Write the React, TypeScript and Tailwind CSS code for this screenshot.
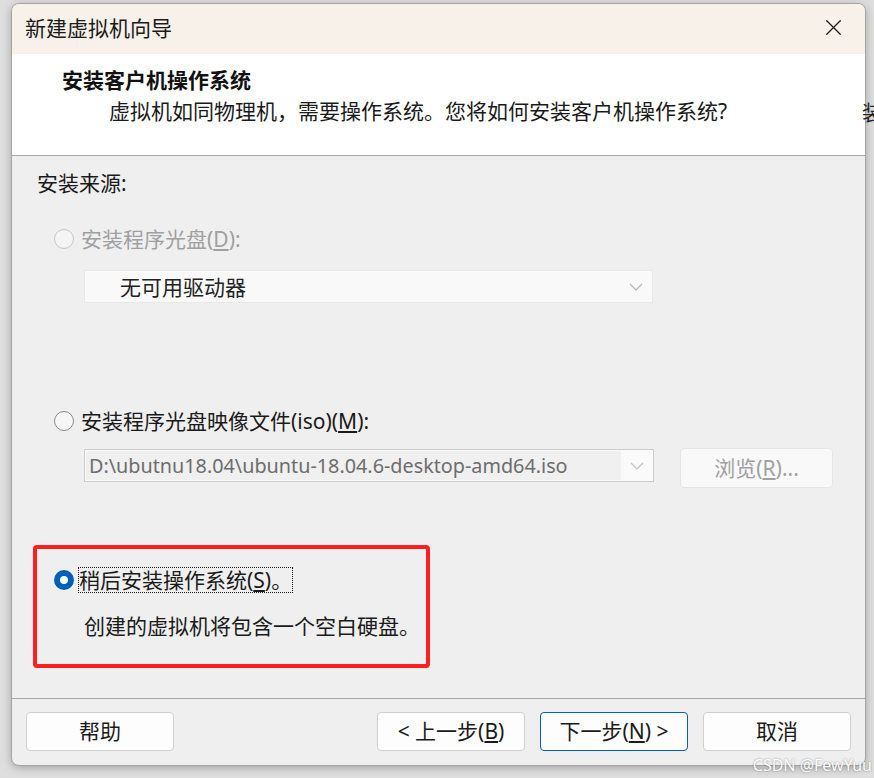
import { X } from "lucide-react";

const font = "font-['Noto_Sans','Noto_Sans_CJK_SC',sans-serif]";

function Chevron({ color = "#b4b4b4" }: { color?: string }) {
  return (
    <svg width="14" height="8" viewBox="0 0 14 8">
      <polyline points="1,1 7,7 13,1" fill="none" stroke={color} strokeWidth="1.2" />
    </svg>
  );
}

function Radio({ state }: { state: "disabled" | "off" | "on" }) {
  if (state === "on") {
    return (
      <span className="flex h-[20px] w-[20px] items-center justify-center rounded-full bg-[#005fb8]">
        <span className="h-[8px] w-[8px] rounded-full bg-white" />
      </span>
    );
  }
  return (
    <span
      className={
        state === "disabled"
          ? "h-[20px] w-[20px] rounded-full border border-[#c6c6c6] bg-[#f4f4f4]"
          : "h-[20px] w-[20px] rounded-full border border-[#8a8a8a] bg-[#f7f7f7]"
      }
    />
  );
}

function FooterButton({ children, primary }: { children: React.ReactNode; primary?: boolean }) {
  return (
    <button
      className={
        "flex h-[39px] w-[148px] items-center justify-center rounded-[4px] bg-[#fdfdfd] text-[21px] leading-[28px] text-[#1a1a1a] " +
        (primary ? "border border-[#005fb8]" : "border border-[#d0d0d0]")
      }
    >
      {children}
    </button>
  );
}

export default function App() {
  return (
    <div className={"relative h-[778px] w-[874px] overflow-hidden bg-[#dedede] pl-[11px] pt-[3px] " + font}>
      <span className="absolute right-[-9px] top-[98px] text-[21px] leading-[28px] text-[#222]">装</span>

      <div className="flex h-[763px] w-[855px] flex-col overflow-hidden rounded-[8px] border border-[#a4a4a4] bg-[#efefef] shadow-[0_2px_8px_rgba(0,0,0,0.25)]">
        {/* title bar */}
        <div className="flex h-[50px] shrink-0 items-center justify-between bg-[#f7f1ea] pb-[3px] pl-[13px] pr-[18px]">
          <span className="text-[21px] leading-[28px] text-[#1a1a1a]">新建虚拟机向导</span>
          <X size={27} strokeWidth={1.1} color="#1a1a1a" />
        </div>

        {/* header */}
        <div className="flex h-[102px] shrink-0 flex-col border-b border-[#a8a8a8] bg-white pt-[12px]">
          <span className="pl-[50px] text-[21px] font-bold leading-[28px] text-[#111]">安装客户机操作系统</span>
          <span className="mt-[3px] pl-[97px] text-[21px] leading-[28px] text-[#1a1a1a]">
            虚拟机如同物理机，需要操作系统。您将如何安装客户机操作系统?
          </span>
        </div>

        {/* body */}
        <div className="relative flex flex-1 flex-col pl-[25px] pt-[13px] text-[21px] leading-[28px] text-[#1a1a1a]">
          <span>安装来源:</span>

          <div className="mt-[28px] flex items-center gap-[7px] pl-[17px] text-[#a0a0a0]">
            <Radio state="disabled" />
            <span>
              安装程序光盘(<u>D</u>):
            </span>
          </div>

          <div className="ml-[47px] mt-[17px] flex h-[33px] w-[569px] items-center justify-between border border-[#e8e8e8] bg-[#f9f9f9] pl-[35px] pr-[9px]">
            <span className="text-[#222]">无可用驱动器</span>
            <Chevron />
          </div>

          <div className="mt-[104px] flex items-center gap-[7px] pl-[17px]">
            <Radio state="off" />
            <span>
              安装程序光盘映像文件(iso)(<u>M</u>):
            </span>
          </div>

          <div className="mt-[13px] flex items-start">
            <div className="ml-[47px] mt-[1px] flex h-[33px] w-[570px] items-center border border-[#cccccc] bg-[#fafafa] p-[1px]">
              <span className="flex h-full w-[535px] items-center bg-[#f0f0f0] pl-[3px] text-[19.8px] text-[#6d6d6d]">
                D:\ubutnu18.04\ubuntu-18.04.6-desktop-amd64.iso
              </span>
              <span className="flex flex-1 justify-center">
                <Chevron color="#c0c0c0" />
              </span>
            </div>
            <button className="ml-[26px] flex h-[40px] w-[153px] items-center justify-center rounded-[4px] border border-[#e6e6e6] bg-[#f9f9f9] text-[21px] text-[#a0a0a0]">
              浏览(<u>R</u>)...
            </button>
          </div>

          <div className="mt-[79px] flex items-center gap-[4px] pl-[17px]">
            <Radio state="on" />
            <span className="flex h-[26px] items-center border border-dotted border-[#1a1a1a]">
              稍后安装操作系统(<u>S</u>)。
            </span>
          </div>

          <span className="mt-[19px] pl-[47px]">创建的虚拟机将包含一个空白硬盘。</span>

          <div className="pointer-events-none absolute left-[21px] top-[389px] h-[123px] w-[397px] rounded-[4px] border-4 border-[#ff1f1f]" />
        </div>

        {/* footer */}
        <div className="flex h-[67px] shrink-0 items-center justify-between border-t border-[#a8a8a8] pb-[2px] pl-[14px] pr-[14px]">
          <FooterButton>帮助</FooterButton>
          <div className="flex gap-[15px]">
            <FooterButton>
              &lt; 上一步(<u>B</u>)
            </FooterButton>
            <FooterButton primary>
              下一步(<u>N</u>) &gt;
            </FooterButton>
            <FooterButton>取消</FooterButton>
          </div>
        </div>
      </div>

      <span className="absolute bottom-[4px] right-[2px] text-[16px] leading-[18px] text-white [text-shadow:0_0_2px_rgba(0,0,0,0.45)]">
        CSDN @FewYuu
      </span>
    </div>
  );
}
